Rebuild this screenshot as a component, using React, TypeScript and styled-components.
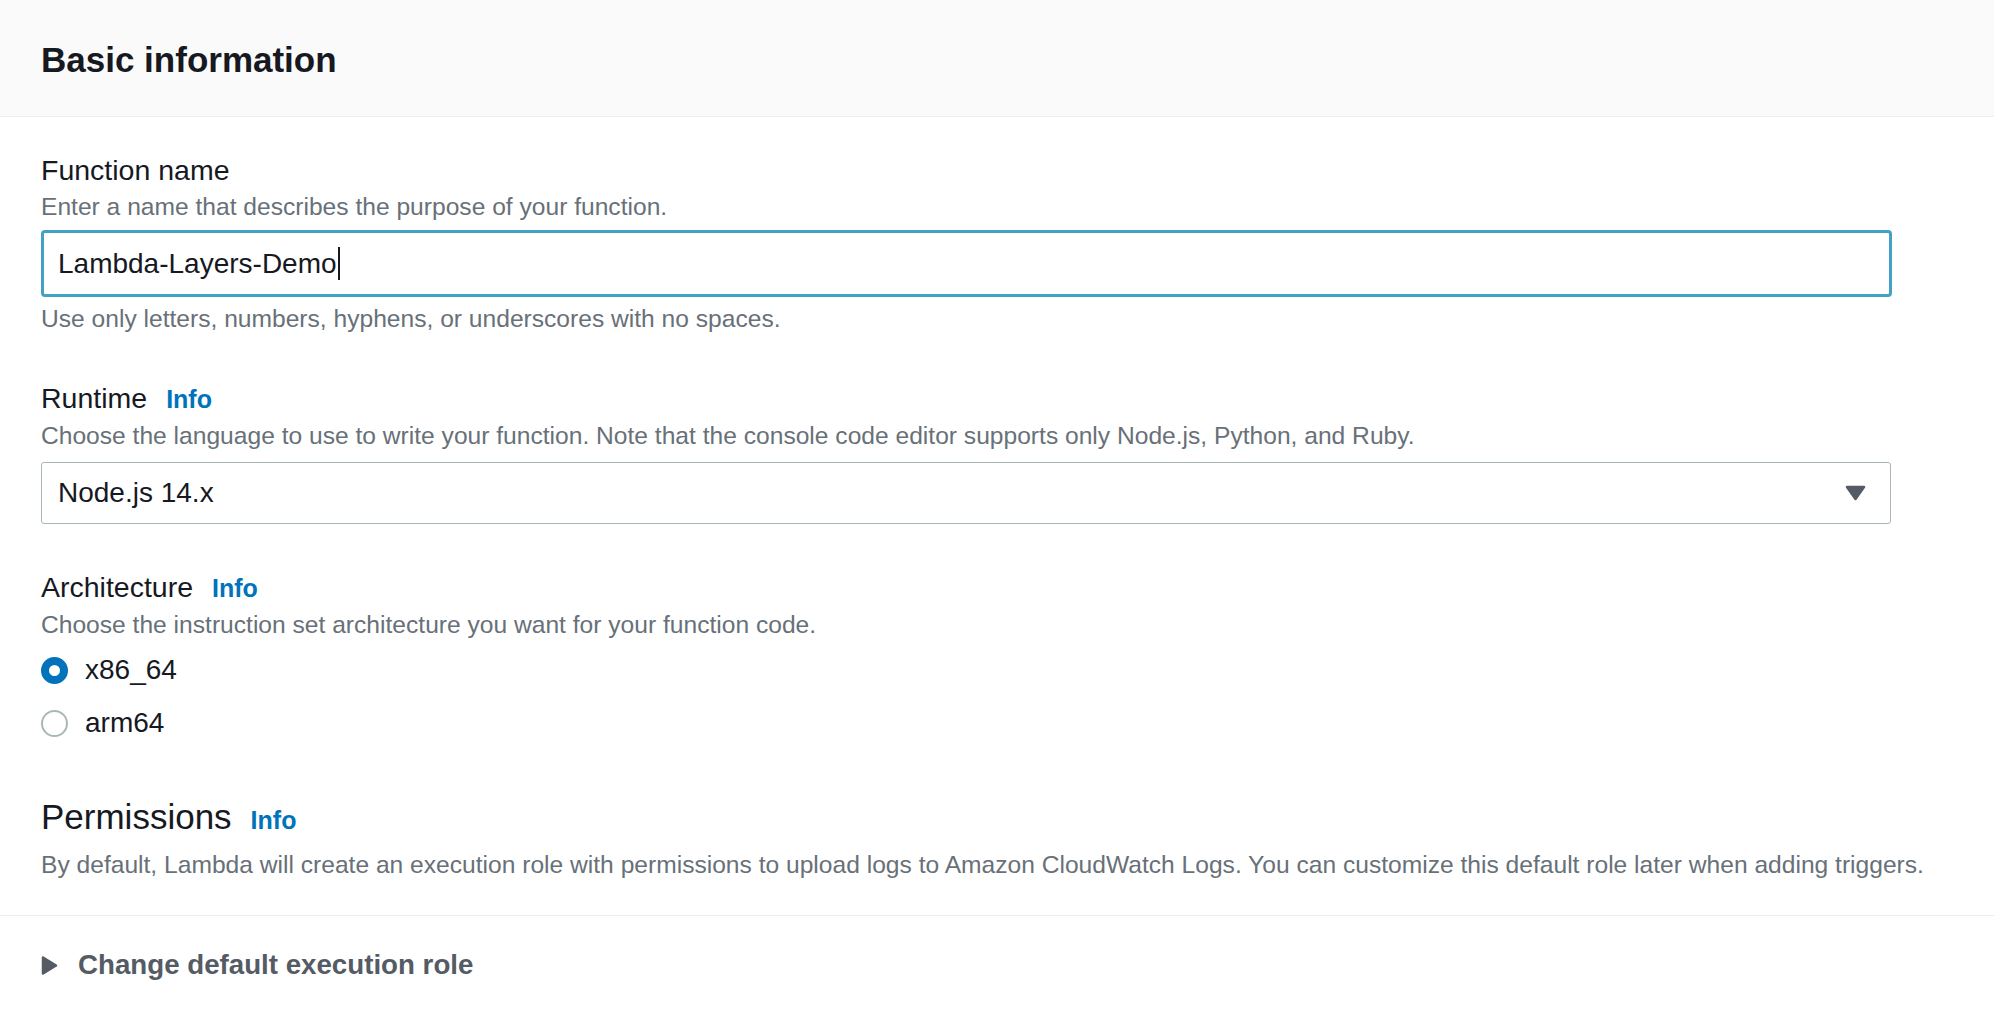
import React from 'react'
import styled, { createGlobalStyle } from 'styled-components'

const GlobalStyle = createGlobalStyle`
  body {
    margin: 0;
    background: #ffffff;
    color: #16191f;
    font-family: 'Liberation Sans', Arial, sans-serif;
  }
`

const Panel = styled.div`
  width: 100%;
  background: #ffffff;
`

const Header = styled.div`
  box-sizing: border-box;
  height: 117px;
  padding: 38px 41px 0;
  background: #fafafa;
  border-bottom: 1px solid #eaeded;
`

const Title = styled.h2`
  margin: 0;
  font-size: 35px;
  line-height: 44px;
  font-weight: 700;
  color: #16191f;
`

const Body = styled.div`
  padding: 35px 41px 34px;
`

const Field = styled.div<{ $gap?: number }>`
  margin-top: ${(p) => p.$gap ?? 0}px;
`

const Label = styled.div`
  display: flex;
  align-items: baseline;
  font-size: 28.5px;
  line-height: 36px;
  color: #16191f;
`

const Heading = styled.div`
  display: flex;
  align-items: baseline;
  font-size: 35px;
  line-height: 44px;
  color: #16191f;
`

const InfoLink = styled.a`
  margin-left: 19px;
  font-size: 25px;
  font-weight: 700;
  color: #0073bb;
  text-decoration: none;
  cursor: pointer;
`

const Description = styled.div<{ $gap?: number }>`
  margin-top: ${(p) => p.$gap ?? 3}px;
  font-size: 24.6px;
  line-height: 32px;
  color: #687078;
`

const TextInput = styled.div`
  box-sizing: border-box;
  display: flex;
  align-items: center;
  width: 1851px;
  height: 67px;
  margin-top: 7px;
  padding: 0 14px;
  border: 3px solid #44a1c6;
  border-radius: 4px;
  font-size: 28px;
  color: #16191f;
`

const Caret = styled.span`
  display: inline-block;
  width: 2px;
  height: 33px;
  margin-left: 1px;
  background: #16191f;
`

const Select = styled.div`
  box-sizing: border-box;
  display: flex;
  align-items: center;
  justify-content: space-between;
  width: 1850px;
  height: 62px;
  margin-top: 10px;
  padding: 0 24px 0 16px;
  border: 1px solid #aab7b8;
  border-radius: 3px;
  font-size: 28px;
  color: #16191f;
`

const RadioGroup = styled.div`
  margin-top: 11px;
  display: flex;
  flex-direction: column;
  gap: 17px;
`

const RadioRow = styled.label`
  display: flex;
  align-items: center;
  gap: 17px;
  font-size: 28px;
  line-height: 36px;
  color: #16191f;
  cursor: pointer;
`

const RadioDot = styled.span<{ $checked?: boolean }>`
  box-sizing: border-box;
  flex: none;
  width: 27px;
  height: 27px;
  border-radius: 50%;
  background: #ffffff;
  border: ${(p) => (p.$checked ? '8px solid #0073bb' : '2px solid #aab7b8')};
`

const Footer = styled.div`
  padding: 31px 41px 0;
  border-top: 1px solid #eaeded;
`

const Expander = styled.div`
  display: flex;
  align-items: center;
  gap: 20px;
  font-size: 27.7px;
  line-height: 36px;
  font-weight: 700;
  color: #545b64;
  cursor: pointer;
`

function CaretDown() {
  return (
    <svg width="21" height="16" viewBox="0 0 21 16">
      <path d="M2 2 L19 2 L10.5 14 Z" fill="#545b64" stroke="#545b64" strokeWidth="2.5" strokeLinejoin="round" />
    </svg>
  )
}

function CaretRight() {
  return (
    <svg width="17" height="19" viewBox="0 0 17 19">
      <path d="M2 1.5 L15 9.5 L2 17.5 Z" fill="#545b64" stroke="#545b64" strokeWidth="2.5" strokeLinejoin="round" />
    </svg>
  )
}

export default function App() {
  return (
    <Panel>
      <GlobalStyle />
      <Header>
        <Title>Basic information</Title>
      </Header>
      <Body>
        <Field>
          <Label>Function name</Label>
          <Description>Enter a name that describes the purpose of your function.</Description>
          <TextInput>
            Lambda-Layers-Demo
            <Caret />
          </TextInput>
          <Description $gap={6}>Use only letters, numbers, hyphens, or underscores with no spaces.</Description>
        </Field>

        <Field $gap={45}>
          <Label>
            Runtime <InfoLink>Info</InfoLink>
          </Label>
          <Description>
            Choose the language to use to write your function. Note that the console code editor supports only Node.js,
            Python, and Ruby.
          </Description>
          <Select>
            <span>Node.js 14.x</span>
            <CaretDown />
          </Select>
        </Field>

        <Field $gap={45}>
          <Label>
            Architecture <InfoLink>Info</InfoLink>
          </Label>
          <Description>Choose the instruction set architecture you want for your function code.</Description>
          <RadioGroup>
            <RadioRow>
              <RadioDot $checked />
              x86_64
            </RadioRow>
            <RadioRow>
              <RadioDot />
              arm64
            </RadioRow>
          </RadioGroup>
        </Field>

        <Field $gap={54}>
          <Heading>
            Permissions <InfoLink>Info</InfoLink>
          </Heading>
          <Description $gap={7}>
            By default, Lambda will create an execution role with permissions to upload logs to Amazon CloudWatch Logs. You
            can customize this default role later when adding triggers.
          </Description>
        </Field>
      </Body>
      <Footer>
        <Expander>
          <CaretRight />
          Change default execution role
        </Expander>
      </Footer>
    </Panel>
  )
}
